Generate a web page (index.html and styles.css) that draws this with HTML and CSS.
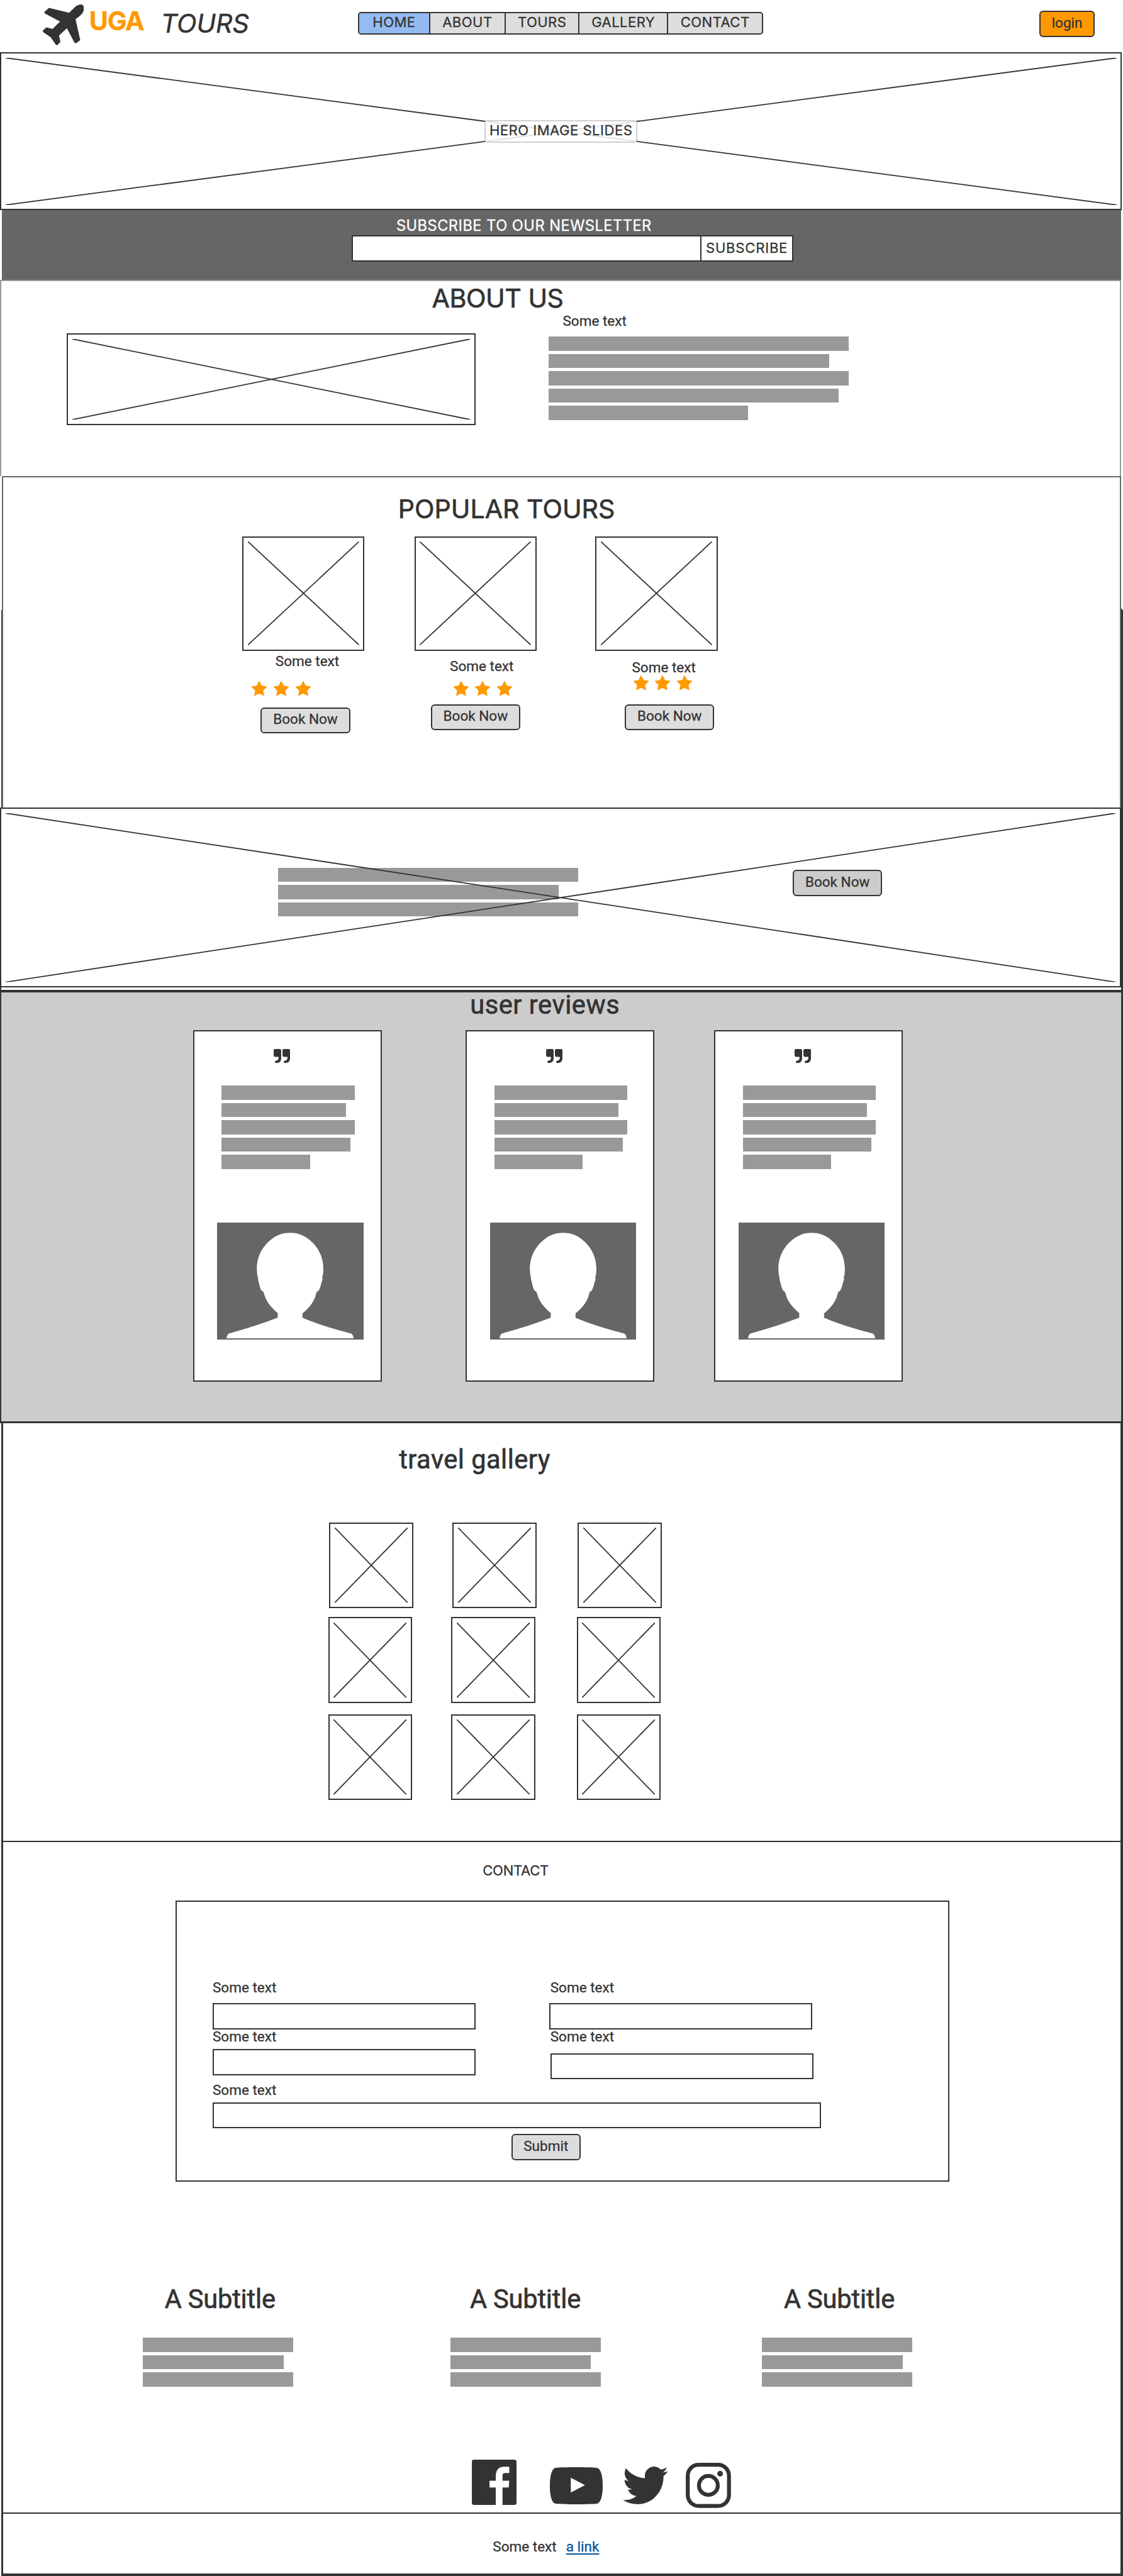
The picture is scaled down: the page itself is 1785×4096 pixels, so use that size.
FILE: index.html
```html
<!DOCTYPE html>
<html lang="en">
<head>
<meta charset="utf-8">
<title>UGA Tours</title>
<link rel="stylesheet" href="styles.css">
</head>
<body>
<svg class="defs" width="0" height="0" aria-hidden="true">
  <symbol id="cross" viewBox="0 0 100 100" preserveAspectRatio="none">
    <path d="M0 0L100 100M100 0L0 100" vector-effect="non-scaling-stroke"/>
  </symbol>
  <symbol id="star" viewBox="0 0 30 29" preserveAspectRatio="none">
    <path d="M15 .4L19.6 9.6L29.7 11.2L22.4 18.4L24.3 28.7L15 24L5.7 28.7L7.6 18.4L.3 11.2L10.4 9.6Z"/>
  </symbol>
  <symbol id="quote" viewBox="335 126 50 50" preserveAspectRatio="none">
    <path d="M339 126H354Q358 126 358 131V158C358 170 352 176 340 176L339 168C347 168 351 163 350 154H342Q335 154 335 147V131Q335 126 339 126Z"/>
    <path transform="translate(27 0)" d="M339 126H354Q358 126 358 131V158C358 170 352 176 340 176L339 168C347 168 351 163 350 154H342Q335 154 335 147V131Q335 126 339 126Z"/>
  </symbol>
  <symbol id="avatar" viewBox="163 753 448 419" preserveAspectRatio="none">
    <path d="M387 790C409 790 424 797 441 810C470 835 489 872 489 920C489 935 487 945 485 953L487 956C481 973 480 990 474 998C470 1001 470 998 467 1008C462 1035 448 1058 425 1079V1095C470 1118 522 1136 575 1152Q580 1156 582 1169H192Q193 1156 200 1151C252 1135 302 1116 349 1095V1078C325 1055 312 1032 307 1008C304 998 304 1001 300 998C294 990 293 973 288 956L289 953C287 945 285 935 285 920C285 872 304 835 333 810C350 797 365 790 387 790Z"/>
  </symbol>
</svg>

<div class="page">
  <header class="header">
    <svg class="plane" viewBox="119 23 115 226" preserveAspectRatio="none"><path d="M225 23C232 24 234 36 233 52C231 74 222 88 210 105L223 220L211 239L207 234L186 155L164 195L168 230L159 249L155 246L141 205L120 176L119 168L129 150L146 159L167 118L125 73L123 66L136 42L192 69L207 40C213 29 219 24 225 23Z"/></svg>
    <span class="brand-uga">UGA</span>
    <span class="brand-tours">TOURS</span>
    <nav class="nav">
      <a class="active">HOME</a><a>ABOUT</a><a>TOURS</a><a>GALLERY</a><a>CONTACT</a>
    </nav>
    <button class="btn login">login</button>
  </header>

  <section class="hero">
    <svg class="cross"><use href="#cross"/></svg>
    <span class="hero-label">HERO IMAGE SLIDES</span>
  </section>

  <section class="newsletter">
    <h3>SUBSCRIBE TO OUR NEWSLETTER</h3>
    <div class="subscribe"><div class="subscribe-input"></div><div class="subscribe-btn">SUBSCRIBE</div></div>
  </section>

  <section class="about">
    <h2 class="caps">ABOUT US</h2>
    <div class="about-row">
      <div class="picture"><svg><use href="#cross"/></svg></div>
      <div class="about-copy">
        <p>Some text</p>
        <div class="bars wide"><i></i><i></i><i></i><i></i><i></i></div>
      </div>
    </div>
  </section>

  <section class="popular">
    <h2 class="caps">POPULAR TOURS</h2>
    <div class="tours">
      <article class="tour one">
        <div class="picture"><svg><use href="#cross"/></svg></div>
        <p>Some text</p>
        <div class="stars"><svg><use href="#star"/></svg><svg><use href="#star"/></svg><svg><use href="#star"/></svg></div>
        <button class="btn">Book Now</button>
      </article>
      <article class="tour two">
        <div class="picture"><svg><use href="#cross"/></svg></div>
        <p>Some text</p>
        <div class="stars"><svg><use href="#star"/></svg><svg><use href="#star"/></svg><svg><use href="#star"/></svg></div>
        <button class="btn">Book Now</button>
      </article>
      <article class="tour three">
        <div class="picture"><svg><use href="#cross"/></svg></div>
        <p>Some text</p>
        <div class="stars"><svg><use href="#star"/></svg><svg><use href="#star"/></svg><svg><use href="#star"/></svg></div>
        <button class="btn">Book Now</button>
      </article>
    </div>
  </section>

  <section class="banner">
    <div class="bars wide"><i></i><i></i><i></i></div>
    <button class="btn">Book Now</button>
    <svg class="cross"><use href="#cross"/></svg>
  </section>

  <section class="reviews">
    <div class="reviews-body">
      <h2>user reviews</h2>
      <div class="review-row">
        <article class="review">
          <svg class="quote"><use href="#quote"/></svg>
          <div class="bars"><i></i><i></i><i></i><i></i><i></i></div>
          <svg class="avatar"><use href="#avatar"/></svg>
        </article>
        <article class="review">
          <svg class="quote"><use href="#quote"/></svg>
          <div class="bars"><i></i><i></i><i></i><i></i><i></i></div>
          <svg class="avatar"><use href="#avatar"/></svg>
        </article>
        <article class="review">
          <svg class="quote"><use href="#quote"/></svg>
          <div class="bars"><i></i><i></i><i></i><i></i><i></i></div>
          <svg class="avatar"><use href="#avatar"/></svg>
        </article>
      </div>
    </div>
  </section>

  <section class="gallery">
    <h2>travel gallery</h2>
    <div class="gallery-row first">
      <div class="picture"><svg><use href="#cross"/></svg></div>
      <div class="picture"><svg><use href="#cross"/></svg></div>
      <div class="picture"><svg><use href="#cross"/></svg></div>
    </div>
    <div class="gallery-row second">
      <div class="picture"><svg><use href="#cross"/></svg></div>
      <div class="picture"><svg><use href="#cross"/></svg></div>
      <div class="picture"><svg><use href="#cross"/></svg></div>
    </div>
    <div class="gallery-row third">
      <div class="picture"><svg><use href="#cross"/></svg></div>
      <div class="picture"><svg><use href="#cross"/></svg></div>
      <div class="picture"><svg><use href="#cross"/></svg></div>
    </div>
  </section>

  <section class="contact">
    <h3>CONTACT</h3>
    <div class="form">
      <div class="fields">
        <div class="col">
          <label>Some text</label><div class="input"></div>
          <label class="next">Some text</label><div class="input near"></div>
        </div>
        <div class="col right">
          <label>Some text</label><div class="input"></div>
          <label class="next">Some text</label><div class="input far"></div>
        </div>
      </div>
      <div class="message"><label>Some text</label><div class="input"></div></div>
      <button class="btn submit">Submit</button>
    </div>

    <div class="subtitles">
      <div class="sub"><h2>A Subtitle</h2><div class="bars"><i></i><i></i><i></i></div></div>
      <div class="sub"><h2>A Subtitle</h2><div class="bars"><i></i><i></i><i></i></div></div>
      <div class="sub"><h2>A Subtitle</h2><div class="bars"><i></i><i></i><i></i></div></div>
    </div>

    <div class="social">
      <svg class="facebook" viewBox="665 974 86 229" preserveAspectRatio="none"><path d="M669 974H747Q751 974 751 985V1192Q751 1203 747 1203H724V1115H736L737 1081H724V1056C724 1045 726 1042 730 1042H737V1010H727C716 1010 711 1028 711 1060V1081H699V1115H711V1203H669Q665 1203 665 1192V985Q665 974 669 974Z"/></svg>
      <svg class="youtube" viewBox="815 1013 101 186" preserveAspectRatio="none"><path fill-rule="evenodd" d="M826 1016C842 1012 889 1012 905 1016C913 1021 916 1060 916 1106C916 1152 913 1191 905 1196C889 1200 842 1200 826 1196C818 1191 815 1152 815 1106C815 1060 818 1021 826 1016ZM855 1066V1140L882 1103Z"/></svg>
      <svg class="twitter" viewBox="0 2.25 24 19.5" preserveAspectRatio="none"><path d="M23.953 4.57a10 10 0 01-2.825.775 4.958 4.958 0 002.163-2.723c-.951.555-2.005.959-3.127 1.184a4.92 4.92 0 00-8.384 4.482C7.69 8.095 4.067 6.13 1.64 3.162a4.822 4.822 0 00-.666 2.475c0 1.71.87 3.213 2.188 4.096a4.904 4.904 0 01-2.228-.616v.06a4.923 4.923 0 003.946 4.827 4.996 4.996 0 01-2.212.085 4.936 4.936 0 004.604 3.417 9.867 9.867 0 01-6.102 2.105c-.39 0-.779-.023-1.17-.067a13.995 13.995 0 007.557 2.209c9.053 0 13.998-7.496 13.998-13.985 0-.21 0-.42-.015-.63A9.935 9.935 0 0024 4.59z"/></svg>
      <svg class="instagram" viewBox="0 0 83 83"><rect x="3.7" y="3.7" width="75.6" height="75.6" rx="20" class="ring"/><circle cx="41.5" cy="41.5" r="17.3" class="ring"/><circle cx="63" cy="20" r="5.2"/></svg>
    </div>
  </section>

  <footer class="footer">
    <span>Some text</span><a>a link</a>
  </footer>
</div>
</body>
</html>
```
FILE: styles.css
```css
/* 1rem is ten design units; the design canvas is 206rem wide */
html { font-size: 8.665px; }
* { box-sizing: border-box; }
body {
  margin: 0;
  background: #fff;
  color: #333;
  font-family: Roboto, "Liberation Sans", sans-serif;
  font-size: 2.6rem;
  line-height: 3rem;
  -webkit-text-stroke: .3px;
}
h2, h3, p { margin: 0; font-weight: 400; }
h2 { font-size: 4.8rem; line-height: 5.6rem; -webkit-text-stroke: .7px; }
h3 { font-size: 2.55rem; line-height: 3rem; }
.caps, h3, .nav, .hero-label, .subscribe-btn, .brand-uga, .brand-tours { font-family: Inter, "Liberation Sans", sans-serif; }
.nav, .hero-label, .subscribe-btn { font-size: 2.55rem; }
h2.caps { margin-bottom: .18rem; font-size: 4.75rem; line-height: 5.42rem; }
svg { display: block; fill: #333; }
.defs { position: absolute; }
span, a, p, h2, h3, label, button { white-space: nowrap; }

.page { position: relative; width: 1785px; height: 4096px; overflow: hidden; isolation: isolate; }
.page::before {
  content: "";
  position: absolute;
  z-index: -1;
  top: 111.6rem; left: 2px; right: 0; bottom: 0;
  border: solid #333;
  border-width: 3px 4px 4px 3px;
  border-radius: 5px 5px 0 0;
}

.btn {
  display: flex;
  justify-content: center;
  align-items: flex-start;
  width: 16.4rem;
  height: 4.8rem;
  padding: calc(.65rem - 2px) 0 0;
  border: 2px solid #333;
  border-radius: 6px;
  background: #ddd;
  color: #333;
  font: inherit;
  line-height: 3rem;
}
.picture { border: 2px solid #333; padding: calc(1rem - 2px); background: #fff; }
.picture svg { width: 100%; height: 100%; overflow: visible; }
#cross path { stroke: #333; stroke-width: 1.8px; fill: none; }

.bars { display: flex; flex-direction: column; gap: .565rem; width: 24.4rem; }
.bars i { height: 2.6rem; background: #999; }
.bars i:nth-child(2) { width: 93.5%; }
.bars i:nth-child(4) { width: 96.7%; }
.bars i:nth-child(5) { width: 66.5%; }
.bars.wide { width: 55rem; }

/* header */
.header { display: flex; align-items: flex-start; height: 9.6rem; }
.plane { width: 7.6rem; height: 7.5rem; margin: .8rem 0 0 7.8rem; }
.brand-uga { width: 12rem; margin: 1.06rem 0 0 .95rem; color: #f90; font-size: 4.75rem; line-height: 5.6rem; font-weight: 700; letter-spacing: -.13rem; }
.brand-tours { width: 20rem; margin: 1.47rem 0 0 1.15rem; font-size: 4.75rem; line-height: 5.6rem; font-style: italic; -webkit-text-stroke: .5px; }
.nav {
  display: grid;
  grid-template-columns: 12.75rem 13.9rem 13.5rem 16.3rem 1fr;
  width: 74.3rem; height: 4.2rem;
  margin: 2.2rem 0 0 16.2rem;
  border: 2px solid #333;
  border-radius: 5px;
  background: #ddd;
  overflow: hidden;
}
.nav a { padding-top: .15rem; text-align: center; letter-spacing: .05rem; border-left: 2px solid #333; }
.nav .active { border-left: 0; background: #94baf2; }
.login { width: 10.1rem; margin: 2rem 0 0 50.7rem; background: #f90; }

/* hero */
.hero { position: relative; display: flex; justify-content: center; align-items: flex-start; width: 205.8rem; height: 29rem; border: 2px solid #333; background: #fff; }
.cross { position: absolute; top: calc(1rem - 2px); left: calc(1rem - 2px); width: calc(100% - 2rem + 4px); height: calc(100% - 2rem + 4px); overflow: visible; }
.hero-label {
  position: relative;
  width: 28rem; height: 4.2rem;
  margin-top: calc(12.4rem - 2px);
  padding-top: calc(.37rem - 2px);
  border: 2px solid #d0d0d0;
  border-radius: 5px;
  background: rgba(255, 255, 255, .85);
  text-align: center;
  letter-spacing: .055rem;
}

/* newsletter */
.newsletter { width: 205.2rem; height: 12.8rem; margin-left: .4rem; padding-top: 1.24rem; background: #666; }
.newsletter h3 { margin-left: 72.3rem; color: #fff; font-size: 2.72rem; line-height: 3.2rem; letter-spacing: .06rem; }
.subscribe { display: flex; margin: .16rem 0 0 64.1rem; }
.subscribe-input { width: 64rem; height: 4.8rem; border: 2px solid #333; border-right: 0; background: #fff; }
.subscribe-btn { width: 17rem; height: 4.8rem; padding-top: calc(.77rem - 2px); border: 2px solid #333; background: #fff; text-align: center; letter-spacing: .09rem; }

/* about */
.about { width: 205.7rem; height: 36rem; padding-top: calc(.7rem - 2px); border: 2px solid #999; border-bottom: 0; background: #fff; }
.about h2 { margin-left: 79rem; letter-spacing: -.05rem; }
.about-row { display: flex; align-items: flex-start; margin-top: -.3rem; }
.about .picture { width: 75rem; height: 16.8rem; margin: 3.8rem 13.4rem 0 12rem; }
.about-copy p { margin: 0 0 1.4rem 2.6rem; }

/* popular tours */
.popular { width: 205.3rem; height: 60.8rem; margin-left: .4rem; padding-top: calc(3.36rem - 2px); border: 2px solid #666; border-bottom: 0; background: #fff; }
.popular h2 { margin-left: 72.4rem; }
.tours { display: flex; align-items: flex-start; margin: 2.24rem 0 0 43.8rem; }
.tour { width: 22.4rem; }
.tour .picture { height: 21rem; }
.stars { display: flex; gap: 1rem; }
.stars svg { width: 3rem; height: 2.9rem; fill: #f90; }
.tour.one p { margin: .36rem 0 0 6.1rem; }
.tour.one .stars { margin: 2.14rem 0 2rem 1.66rem; }
.tour.one .btn { margin-left: 3.4rem; }
.tour.two { margin-left: 9.2rem; }
.tour.two p { margin: 1.34rem 0 0 6.5rem; }
.tour.two .stars { margin: 1.16rem 0 1.4rem 7.05rem; }
.tour.two .btn { margin-left: 3rem; }
.tour.three { margin-left: 10.8rem; }
.tour.three p { margin: 1.56rem 0 0 6.7rem; }
.tour.three .stars { margin: -.1rem 0 2.44rem 6.85rem; }
.tour.three .btn { margin-left: 5.4rem; }

/* banner */
.banner { position: relative; display: flex; align-items: flex-start; width: 205.6rem; height: 33rem; border: 2px solid #333; background: #fff; }
.banner .bars { margin: 10.8rem 0 0 50.8rem; }
.banner .btn { margin: 11.2rem 0 0 39.4rem; background: #ccc; }

/* reviews */
.reviews { width: 205.6rem; height: 80rem; padding-top: .4rem; border-left: 2px solid #333; background: #fff; }
.reviews-body { height: 79.6rem; border: solid #333; border-width: 4px 0 3px; background: #ccc; }
.reviews h2 { margin-left: 86rem; line-height: 4.6rem; letter-spacing: .065rem; }
.review-row { display: flex; margin: 2.35rem 0 0 35.2rem; }
.review { width: 34.6rem; height: 64.6rem; border: 2px solid #333; background: #fff; }
.review:nth-child(2) { margin: 0 11rem 0 15.4rem; }
.quote { width: 3rem; height: 2.6rem; margin: 3.3rem 0 0 14.5rem; }
.review .bars { margin: 4.1rem 0 0 5rem; }
.avatar { width: 26.8rem; height: 21.4rem; margin: 9.9rem 0 0 4.2rem; background: #666; fill: #fff; }

/* gallery */
.gallery { height: 76.6rem; padding-top: 3.85rem; }
.gallery h2 { margin-left: 73.2rem; letter-spacing: .055rem; }
.gallery-row { display: grid; grid-template-columns: repeat(3, 15.4rem); column-gap: 7.2rem; margin-left: 60.2rem; }
.gallery-row .picture { height: 15.8rem; }
.gallery-row .picture:nth-child(3) { margin: 0 -.4rem 0 .4rem; }
.gallery-row.first { margin: 8.7rem 0 1.6rem 60.4rem; }
.gallery-row.second { margin-bottom: 2rem; }

/* contact */
.contact { width: 205.3rem; height: 123.3rem; margin-left: .4rem; padding-top: calc(3.96rem - 2px); border-top: 2px solid #333; }
.contact h3 { margin-left: 88.15rem; letter-spacing: -.035rem; }
.form { width: 142rem; height: 51.6rem; margin: 4.04rem 0 0 31.8rem; padding: calc(14.41rem - 2px) 0 0 calc(6.8rem - 2px); border: 2px solid #333; }
.fields { display: flex; }
.col { width: 61.8rem; }
.form label { display: block; }
.right label { margin-left: .15rem; }
.input { width: 48.2rem; height: 4.8rem; margin-top: 1.39rem; border: 2px solid #333; background: #fff; }
.form .next { margin-top: -.19rem; }
.input.near { margin-top: .79rem; }
.input.far { margin: 1.59rem 0 0 .2rem; }
.message { margin-top: .36rem; }
.message .input { width: 111.6rem; margin-top: .84rem; }
.submit { width: 12.7rem; margin: 1rem 0 0 54.8rem; }

.subtitles { display: flex; margin: 18.76rem 0 0 25.8rem; }
.sub { width: 27.6rem; }
.sub:nth-child(2) { margin: 0 29.6rem 0 28.8rem; }
.sub h2 { margin: 0 0 4.24rem 4rem; letter-spacing: -.02rem; }
.sub:nth-child(2) h2 { margin-left: 3.6rem; }
.sub .bars { width: 27.6rem; }

.social { display: flex; align-items: flex-start; margin: 13.4rem 0 0 86.2rem; }
.facebook { width: 8.2rem; height: 8.3rem; }
.youtube { width: 9.7rem; height: 6.8rem; margin: 1.4rem 0 0 6.1rem; }
.twitter { width: 8.3rem; height: 6.9rem; margin: 1.3rem 0 0 3.6rem; }
.instagram { width: 8.3rem; height: 8.3rem; margin: .6rem 0 0 3.3rem; }
.ring { fill: none; stroke: #333; stroke-width: 7.2; }

/* footer */
.footer { display: flex; gap: 1.75rem; width: 205.3rem; margin-left: .4rem; padding: 4.45rem 0 0 90rem; border-top: 2px solid #333; }
.footer a { color: #05529b; text-decoration: underline; text-decoration-thickness: 2px; text-underline-offset: .4rem; }
```
